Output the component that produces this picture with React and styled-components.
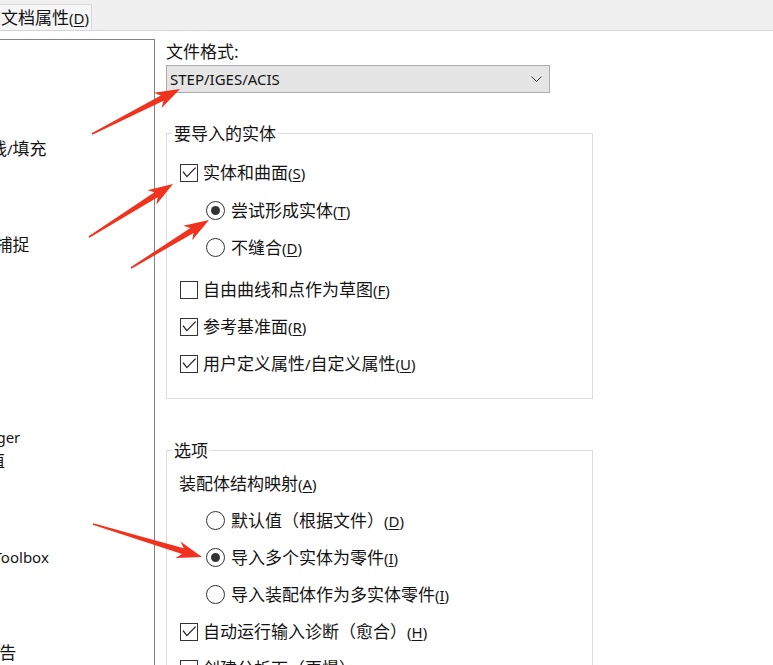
import React from "react";
import styled, { createGlobalStyle } from "styled-components";

const GlobalStyle = createGlobalStyle`
  html, body {
    margin: 0;
    padding: 0;
    background: #fff;
    overflow: hidden;
  }
  body {
    font-family: "Noto Sans CJK SC", "Noto Sans", sans-serif;
    font-size: 17px;
    color: #141414;
  }
`;

const Window = styled.div`
  position: relative;
  width: 773px;
  height: 665px;
  overflow: hidden;
  background: #fff;
`;

const TabBar = styled.div`
  height: 30px;
  display: flex;
  align-items: flex-end;
  background: #f0f0f0;
  border-bottom: 1px solid #d4d4d4;
`;

const Tab = styled.div`
  height: 26px;
  padding: 0 2px 0 1px;
  display: flex;
  align-items: center;
  background: #f6f6f6;
  border-top: 1px solid #d9d9d9;
  border-right: 1px solid #d9d9d9;
  box-sizing: border-box;
  line-height: 26px;
  white-space: nowrap;
`;

const Body = styled.div`
  display: flex;
  align-items: flex-start;
`;

const Tree = styled.ul`
  list-style: none;
  margin: 8px 0 0 -140px;
  padding: 0;
  width: 295px;
  height: 660px;
  flex-shrink: 0;
  box-sizing: border-box;
  overflow: hidden;
  border-top: 1px solid #828282;
  border-right: 1px solid #828282;
`;

const TreeItem = styled.li`
  height: 24px;
  line-height: 24px;
  padding-left: ${p => 43 + p.$depth * 19}px;
  white-space: nowrap;
`;

const Panel = styled.div`
  margin-left: 11px;
  width: 427px;
`;

const FieldLabel = styled.div`
  line-height: 22px;
  padding-top: 9px;
`;

const Select = styled.div`
  margin-top: 3px;
  width: 384px;
  height: 28px;
  box-sizing: border-box;
  padding: 0 7px 0 3px;
  display: flex;
  align-items: center;
  justify-content: space-between;
  background: #e5e5e5;
  border: 1px solid #adadad;
  line-height: 26px;
`;

const Group = styled.fieldset`
  margin: ${p => p.$gap}px 0 0;
  padding: 0 0 16px 5px;
  width: 427px;
  min-width: 0;
  box-sizing: border-box;
  border: 1px solid #dcdcdc;
`;

const Legend = styled.legend`
  padding: 0 2px;
  margin: 0;
  line-height: 22px;
`;

const Rows = styled.div`
  padding-top: ${p => p.$pad}px;
`;

const Row = styled.div`
  height: 37px;
  display: flex;
  align-items: center;
  padding-left: ${p => p.$indent}px;
  white-space: nowrap;
`;

const RadioList = styled.div`
  margin: ${p => p.$top}px 0 ${p => p.$bottom}px;
`;

const Box = styled.span`
  width: 18px;
  height: 18px;
  box-sizing: border-box;
  border: 1px solid #333;
  background: #fff;
  margin-right: 5px;
  flex-shrink: 0;
  display: flex;
`;

const Radio = styled.span`
  width: 19px;
  height: 19px;
  box-sizing: border-box;
  border-radius: 50%;
  border: 1px solid #333;
  background: #fff;
  margin-right: 6px;
  flex-shrink: 0;
  display: flex;
  align-items: center;
  justify-content: center;

  &::after {
    content: "";
    width: 9px;
    height: 9px;
    border-radius: 50%;
    background: ${p => (p.$on ? "#333" : "transparent")};
  }
`;

const Text = styled.span`
  line-height: 24px;
`;

const Latin = styled.span`
  font-family: "Noto Sans", "Open Sans", sans-serif;
  font-size: 15px;
`;

const Key = styled.u`
  text-decoration-thickness: 1px;
  text-underline-offset: 2px;
`;

const Overlay = styled.svg`
  position: absolute;
  left: 0;
  top: 0;
  pointer-events: none;
`;

const treeItems = [
  ["普通", 0], ["MBD", 0], ["工程图", 0], ["显示类型", 1],
  ["区域剖面线/填充", 1], ["性能", 1], ["颜色", 0], ["草图", 0],
  ["几何关系/捕捉", 1], ["显示", 0], ["选择", 0], ["性能", 0],
  ["装配体", 0], ["外部参考", 0], ["默认模板", 0], ["文件位置", 0],
  ["FeatureManager", 0], ["选值框增量值", 0], ["视图", 0], ["备份/恢复", 0],
  ["触摸", 0], ["异型孔向导/Toolbox", 0], ["文件探索器", 0], ["搜索", 0],
  ["协作", 0], ["信息/错误/警告", 0], ["导入", 0], ["导出", 0]
];

const arrows = [
  [92, 134, 180, 89],
  [89, 237, 173, 184],
  [131, 268, 209, 220],
  [93, 524, 202, 557]
];

// ascii runs get the smaller latin face, like the dialog font does
const Mixed = ({ text }) =>
  text
    .split(/([\x20-\x7e]+)/)
    .filter(Boolean)
    .map((part, i) =>
      /^[\x20-\x7e]+$/.test(part) ? <Latin key={i}>{part}</Latin> : <span key={i}>{part}</span>
    );

const Label = ({ text, k }) => (
  <Text>
    <Mixed text={text} />
    <Latin>
      (<Key>{k}</Key>)
    </Latin>
  </Text>
);

const Check = ({ on, children }) => (
  <Row $indent={8}>
    <Box>
      {on && (
        <svg width="16" height="16" viewBox="0 0 16 16">
          <polyline
            points="2,6.6 5.9,11.6 14.6,2.6"
            fill="none"
            stroke="#222"
            strokeWidth="1.3"
          />
        </svg>
      )}
    </Box>
    {children}
  </Row>
);

const Option = ({ on, children }) => (
  <Row $indent={34}>
    <Radio $on={on} />
    {children}
  </Row>
);

const Arrow = ({ x1, y1, x2, y2 }) => {
  const len = Math.hypot(x2 - x1, y2 - y1);
  const angle = (Math.atan2(y2 - y1, x2 - x1) * 180) / Math.PI;
  const pts = [
    [0, -0.8], [len - 20, -3], [len - 25, -8.5], [len, 0],
    [len - 25, 8.5], [len - 20, 3], [0, 0.8]
  ].map(p => p.join(",")).join(" ");
  return (
    <g transform={`translate(${x1} ${y1}) rotate(${angle})`}>
      <polygon points={pts} fill="#f0321e" />
    </g>
  );
};

export default function App() {
  return (
    <Window>
      <GlobalStyle />
      <TabBar>
        <Tab>
          <Label text="文档属性" k="D" />
        </Tab>
      </TabBar>
      <Body>
        <Tree>
          {treeItems.map(([name, depth], i) => (
            <TreeItem key={i} $depth={depth}>
              <Mixed text={name} />
            </TreeItem>
          ))}
        </Tree>
        <Panel>
          <FieldLabel>文件格式:</FieldLabel>
          <Select>
            <Latin>STEP/IGES/ACIS</Latin>
            <svg width="11" height="6" viewBox="0 0 11 6">
              <polyline points="0.5,0.5 5.5,5.5 10.5,0.5" fill="none" stroke="#333" strokeWidth="1" />
            </svg>
          </Select>

          <Group $gap={29}>
            <Legend>要导入的实体</Legend>
            <Rows $pad={10}>
              <Check on>
                <Label text="实体和曲面" k="S" />
              </Check>
              <RadioList $top={1} $bottom={5}>
                <Option on>
                  <Label text="尝试形成实体" k="T" />
                </Option>
                <Option>
                  <Label text="不缝合" k="D" />
                </Option>
              </RadioList>
              <Check>
                <Label text="自由曲线和点作为草图" k="F" />
              </Check>
              <Check on>
                <Label text="参考基准面" k="R" />
              </Check>
              <Check on>
                <Label text="用户定义属性/自定义属性" k="U" />
              </Check>
            </Rows>
          </Group>

          <Group $gap={40}>
            <Legend>选项</Legend>
            <Rows $pad={4}>
              <Row $indent={7}>
                <Label text="装配体结构映射" k="A" />
              </Row>
              <Option>
                <Label text="默认值（根据文件）" k="D" />
              </Option>
              <Option on>
                <Label text="导入多个实体为零件" k="I" />
              </Option>
              <Option>
                <Label text="导入装配体作为多实体零件" k="I" />
              </Option>
              <Check on>
                <Label text="自动运行输入诊断（愈合）" k="H" />
              </Check>
              <Check>
                <Label text="创建分析面（更慢）" k="S" />
              </Check>
            </Rows>
          </Group>
        </Panel>
      </Body>
      <Overlay width="773" height="665">
        {arrows.map(([x1, y1, x2, y2], i) => (
          <Arrow key={i} x1={x1} y1={y1} x2={x2} y2={y2} />
        ))}
      </Overlay>
    </Window>
  );
}
